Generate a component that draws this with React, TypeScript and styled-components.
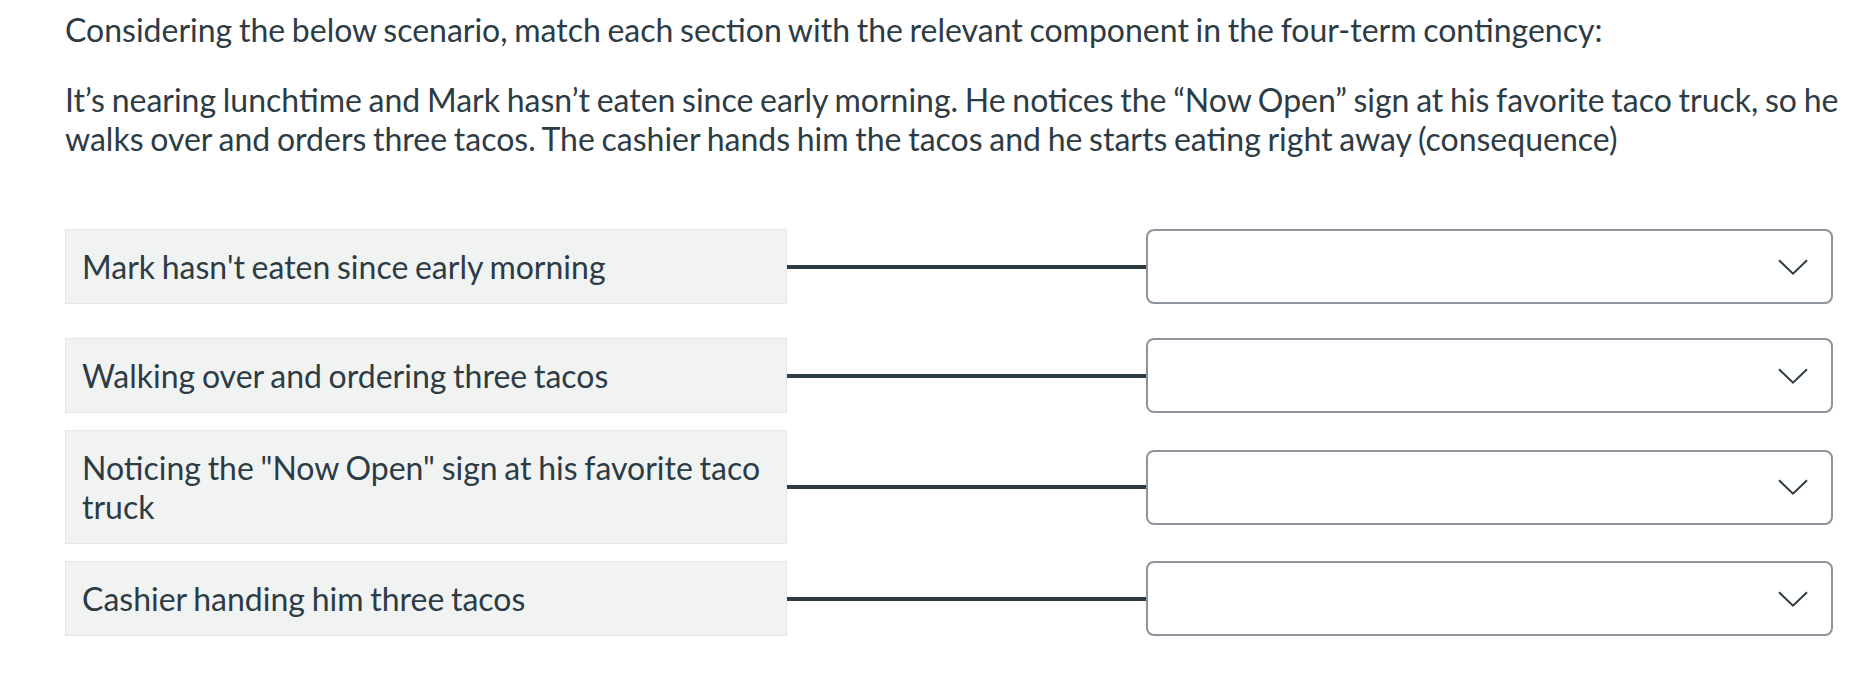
import React from "react";
import styled, { createGlobalStyle } from "styled-components";

const GlobalStyle = createGlobalStyle`
  html, body {
    margin: 0;
    padding: 0;
    background: #ffffff;
  }
  body {
    font-family: Lato, "Open Sans", "Liberation Sans", sans-serif;
    color: #2d3b45;
  }
  * { box-sizing: border-box; }
`;

const Page = styled.div`
  width: 1850px;
  height: 698px;
  padding: 10px 0 0 65px;
  overflow: hidden;
`;

const Prompt = styled.p`
  margin: 0;
  font-size: 32px;
  line-height: 39px;
  word-spacing: -1.5px;
  color: #2d3b45;
`;

const Scenario = styled(Prompt)`
  margin-top: 31px;
`;

const Matches = styled.div`
  margin-top: 54px;
  display: flex;
  flex-direction: column;
`;

const Row = styled.div`
  display: flex;
  align-items: center;
  min-height: 109px;
`;

const Term = styled.div`
  width: 722px;
  flex: none;
  background: #f1f3f3;
  border: 1px solid #e3e6e6;
  padding: 17px 14px 17px 16px;
  font-size: 32px;
  line-height: 39px;
  word-spacing: -1.5px;
  color: #2d3b45;
`;

const Connector = styled.div`
  flex: none;
  width: 359px;
  height: 4px;
  background: #2d3b45;
`;

const Select = styled.div`
  flex: none;
  width: 687px;
  height: 75px;
  border: 2px solid #8d949c;
  border-radius: 8px;
  background: #ffffff;
  display: flex;
  align-items: center;
  justify-content: flex-end;
  padding-right: 23px;
`;

const Chevron = () => (
  <svg width="30" height="16" viewBox="0 0 30 16" fill="none">
    <path d="M1 1.2 L15 14.6 L29 1.2" stroke="#2d3b45" strokeWidth="2" />
  </svg>
);

const items = [
  "Mark hasn't eaten since early morning",
  "Walking over and ordering three tacos",
  'Noticing the "Now Open" sign at his favorite taco truck',
  "Cashier handing him three tacos",
];

export default function App() {
  return (
    <>
      <GlobalStyle />
      <Page>
        <Prompt>
          Considering the below scenario, match each section with the relevant component in the four-term contingency:
        </Prompt>
        <Scenario>
          It’s nearing lunchtime and Mark hasn’t eaten since early morning. He notices the “Now Open” sign at his favorite taco truck, so he walks over and orders three tacos. The cashier hands him the tacos and he starts eating right away (consequence)
        </Scenario>
        <Matches>
          {items.map((t) => (
            <Row key={t}>
              <Term>{t}</Term>
              <Connector />
              <Select>
                <Chevron />
              </Select>
            </Row>
          ))}
        </Matches>
      </Page>
    </>
  );
}
